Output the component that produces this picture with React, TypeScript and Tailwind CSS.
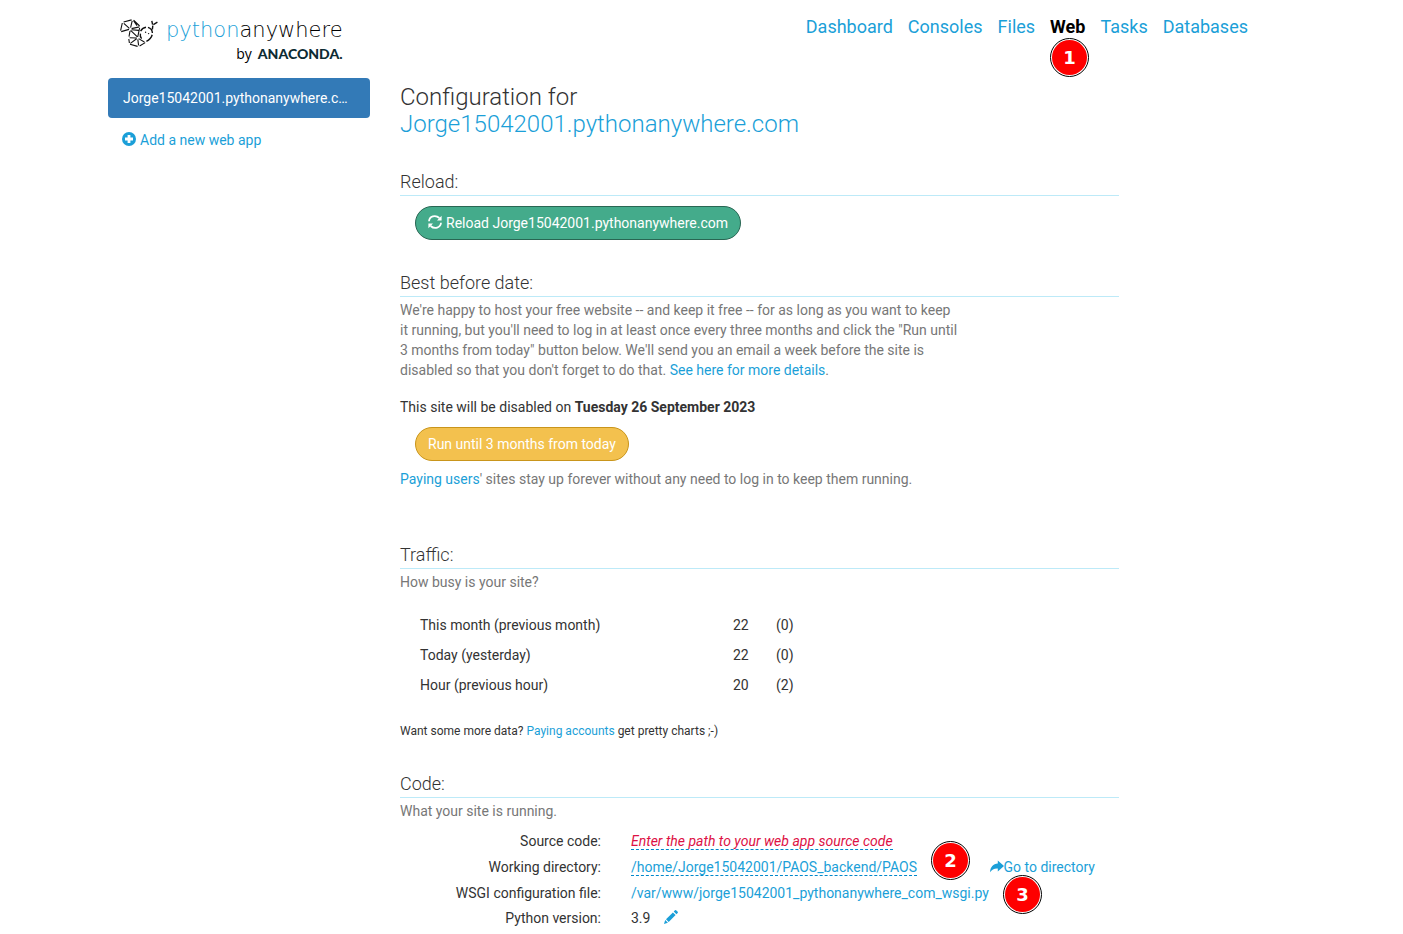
import React from "react";

const link = "text-[#1b9fd8] hover:underline";

function Snake() {
  return (
    <svg width="40" height="30" viewBox="0 0 40 30" fill="none" stroke="#111" strokeWidth="1.1" aria-hidden="true">
      <path d="M1.6 12.6 3.3 5M4.6 4 12.6 1.9M4.8 5.3 10.4 10.4M2.2 13.6 10 11.4M13.2 2.8 11.6 9.6M14.6 2.2 20.6 8M12.6 10.6 20.4 8.9M14.6 2.6 18 7.6" />
      <path d="M11.6 12.4 18.4 18.8M11 13 10 18.6M12.6 11.8 19.6 12.4M20.6 10 18.8 18.6M10.6 19.8 17.8 20M9.8 21 10.4 25M11.4 25.4 17.6 20.8M18.8 21.4 19.6 27.4M11 26.2 18.6 28.4M20.6 28 26.2 24.6M19.6 20.6 25.4 24" />
      <path d="M21.6 13.2Q23.6 9.6 27 9.2M29 9.4Q33.2 10.8 33.4 15M33.2 16.8Q32 21.2 27.4 23.4M21.4 15.6Q20.8 18.6 22.6 20.6M33.4 11.4 33.8 7.6M33.6 6.6 32.8 2.8M34.4 6.6 38.4 4.2" strokeWidth="1.4" />
      <circle cx="26.6" cy="14.2" r="0.7" fill="#111" stroke="none" />
      <circle cx="29.6" cy="15.6" r="0.7" fill="#111" stroke="none" />
    </svg>
  );
}

function PlusCircle() {
  return (
    <svg width="14" height="14" viewBox="0 0 14 14" aria-hidden="true" className="-mt-0.5 shrink-0">
      <circle cx="7" cy="7" r="7" fill="#1b9fd8" />
      <path d="M5.6 3h2.8v2.6H11v2.8H8.4V11H5.6V8.4H3V5.6h2.6z" fill="#fff" />
    </svg>
  );
}

function Refresh() {
  return (
    <svg width="14" height="14" viewBox="0 0 14 14" aria-hidden="true" className="-mt-0.5 shrink-0">
      <g fill="none" stroke="#fff" strokeWidth="1.8">
        <path d="M1 6.2C1.4 1.2 7.4-.6 11.4 3" />
        <path d="M13 7.8C12.6 12.8 6.6 14.6 2.6 11" />
      </g>
      <path d="M13.6.8V5.6H9zM.4 13.2V8.4H5z" fill="#fff" />
    </svg>
  );
}

function Pencil() {
  return (
    <svg width="14" height="14" viewBox="0 0 14 14" fill="#1b9fd8" aria-hidden="true">
      <path d="M0 14 1.2 10.1 3.9 12.8ZM2 9.3 8.9 2.4 11.6 5.1 4.7 12ZM9.7 1.6 11 .3Q11.7-.2 12.4.5L13.5 1.6Q14.2 2.3 13.7 3L12.4 4.3Z" />
    </svg>
  );
}

function ShareArrow() {
  return (
    <svg width="14" height="14" viewBox="0 0 14 14" fill="#1b9fd8" aria-hidden="true" className="shrink-0">
      <path d="M7.8.6 14 6 7.8 11.4V8.4C4.2 8.2 1.8 9.4 0 12.2 .4 7 3.2 3.8 7.8 3.6Z" />
    </svg>
  );
}

function Badge({ n, place }: { n: number; place: string }) {
  return (
    <span className={`absolute flex size-[39px] items-center justify-center rounded-full border border-black bg-white p-px ${place}`}>
      <span className="flex size-full items-center justify-center rounded-full bg-[#fe0000] font-['DejaVu_Sans',sans-serif] text-lg font-bold leading-none text-white">
        {n}
      </span>
    </span>
  );
}

function Heading({ children }: { children: React.ReactNode }) {
  return <h2 className="border-b border-[#bdeaf8] pb-[3px] text-lg font-light leading-5">{children}</h2>;
}

const tabs = ["Dashboard", "Consoles", "Files", "Web", "Tasks", "Databases"];
const traffic = [
  ["This month (previous month)", "22", "(0)"],
  ["Today (yesterday)", "22", "(0)"],
  ["Hour (previous hour)", "20", "(2)"],
];

export default function App() {
  return (
    <div className="bg-white pr-[47px] font-[Roboto,sans-serif] text-sm leading-5 text-[#333]">
      <div className="mx-auto max-w-[1170px] px-[15px]">
        <header className="flex h-[78px] items-start justify-between">
          <a href="#home" className="flex pl-[11px] pt-[18px]" aria-label="pythonanywhere by ANACONDA">
            <Snake />
            <span className="flex flex-col items-end pl-[7px] text-black">
              <span className="font-['DejaVu_Sans',sans-serif] text-[21px] font-extralight leading-6">
                <span className="text-[#1b9fd8]">python</span>anywhere
              </span>
              <span className="flex items-baseline gap-1.5 pt-0.5 leading-6">
                <span className="font-['Open_Sans',sans-serif] text-sm">by</span>
                <span className="font-[Lato,sans-serif] text-sm font-black text-[#0d2b33]">ANACONDA.</span>
              </span>
            </span>
          </a>
          <nav className="flex gap-[15px] pt-[14px] text-lg leading-[26px]">
            {tabs.map((tab) =>
              tab === "Web" ? (
                <span key={tab} className="relative">
                  <a href="#web" aria-current="page" className="font-bold text-black">Web</a>
                  <Badge n={1} place="left-0 top-6" />
                </span>
              ) : (
                <a key={tab} href={`#${tab}`} className={link}>{tab}</a>
              )
            )}
          </nav>
        </header>

        <div className="flex items-start gap-[30px]">
          <aside className="w-[262px] shrink-0">
            <a href="#app" className="block rounded bg-[#337ab7] px-[15px] py-2.5 text-white">
              <span className="block truncate">Jorge15042001.pythonanywhere.com</span>
            </a>
            <a href="#new" className={`mt-0.5 flex items-center gap-1 px-[14px] py-2.5 ${link}`}>
              <PlusCircle />
              Add a new web app
            </a>
          </aside>

          <main className="min-w-0 max-w-[719px] flex-1">
            <h1 className="pt-1.5 text-2xl font-light leading-[27px]">
              Configuration for
              <br />
              <a href="#site" className={link}>Jorge15042001.pythonanywhere.com</a>
            </h1>

            <section className="mt-[34px]">
              <Heading>Reload:</Heading>
              <button className="ml-[15px] mt-2.5 flex h-[34px] items-center gap-1 rounded-full border border-[#296653] bg-[#44ab8b] px-3 text-white">
                <Refresh />
                Reload Jorge15042001.pythonanywhere.com
              </button>
            </section>

            <section className="mt-[33px]">
              <Heading>Best before date:</Heading>
              <p className="max-w-[560px] pt-[3px] text-[#777]">
                We're happy to host your free website -- and keep it free -- for as long as you want to keep it running, but you'll need to log in at least once every three months and click the "Run until 3 months from today" button below. We'll send you an email a week before the site is disabled so that you don't forget to do that.{" "}
                <a href="#details" className={link}>See here for more details</a>.
              </p>
              <p className="mt-[17px]">
                This site will be disabled on <strong>Tuesday 26 September 2023</strong>
              </p>
              <button className="ml-[15px] mt-2.5 flex h-[34px] items-center rounded-full border border-[#c9951b] bg-[#f3c14e] px-3 text-white">
                Run until 3 months from today
              </button>
              <p className="mt-2 text-[#777]">
                <a href="#paying" className={link}>Paying users</a>' sites stay up forever without any need to log in to keep them running.
              </p>
            </section>

            <section className="mt-14">
              <Heading>Traffic:</Heading>
              <p className="pt-[3px] text-[#777]">How busy is your site?</p>
              <table className="mt-[18px] w-[408px]">
                <tbody>
                  {traffic.map(([label, now, before]) => (
                    <tr key={label}>
                      <th scope="row" className="py-[5px] pl-5 text-left font-normal">{label}</th>
                      <td className="w-[43px] py-[5px]">{now}</td>
                      <td className="w-8 py-[5px]">{before}</td>
                    </tr>
                  ))}
                </tbody>
              </table>
              <p className="mt-[21px] text-xs leading-5">
                Want some more data? <a href="#accounts" className={link}>Paying accounts</a> get pretty charts ;-)
              </p>
            </section>

            <section className="mt-[33px]">
              <Heading>Code:</Heading>
              <p className="pt-[3px] text-[#777]">What your site is running.</p>
              <dl className="grid grid-cols-[201px_1fr] gap-x-[30px] pt-2.5">
                <dt className="text-right">Source code:</dt>
                <dd className="flex h-[26px] items-start pt-0.5 leading-4">
                  <a href="#source" className="border-b border-dashed border-[#0088cc] italic text-[#dd1144]">Enter the path to your web app source code</a>
                </dd>
                <dt className="text-right">Working directory:</dt>
                <dd className="relative flex h-[26px] items-start justify-between pr-6 pt-0.5 leading-4">
                  <a href="#directory" className="border-b border-dashed border-[#0088cc] text-[#1b9fd8]">/home/Jorge15042001/PAOS_backend/PAOS</a>
                  <a href="#go" className={`flex items-center ${link}`}>
                    <ShareArrow />
                    Go to directory
                  </a>
                  <Badge n={2} place="left-[300px] -top-4" />
                </dd>
                <dt className="text-right">WSGI configuration file:</dt>
                <dd className="relative h-[25px]">
                  <a href="#wsgi" className={link}>/var/www/jorge15042001_pythonanywhere_com_wsgi.py</a>
                  <Badge n={3} place="left-[372px] -top-2" />
                </dd>
                <dt className="text-right">Python version:</dt>
                <dd className="flex items-center gap-[14px]">
                  3.9
                  <button aria-label="Edit Python version" className="-mt-0.5"><Pencil /></button>
                </dd>
              </dl>
            </section>
          </main>
        </div>
      </div>
    </div>
  );
}
